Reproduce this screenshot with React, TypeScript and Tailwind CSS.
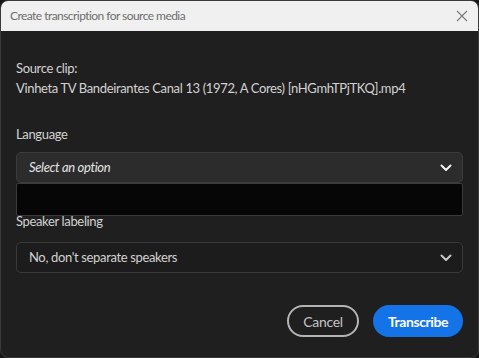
import React from 'react';

function Chevron({ className = '' }: { className?: string }) {
  return (
    <svg width="12" height="8" viewBox="0 0 12 8" className={className} fill="none">
      <path d="M1.5 1.5L6 6L10.5 1.5" stroke="currentColor" strokeWidth="2" strokeLinecap="round" strokeLinejoin="round" />
    </svg>
  );
}

export default function App() {
  return (
    <div className="w-[479px] h-[358px] bg-[#171717] font-['Lato','Liberation_Sans',sans-serif]">
      <div className="relative w-full h-full flex flex-col rounded-[8px] border border-[#3a3a3a] overflow-hidden bg-[#1f1f1f]">
        <div className="h-[30px] shrink-0 flex items-center justify-between bg-[#f0f0f0] pl-[9px] pr-[10px]">
          <span className="text-[12px] tracking-[-0.55px] text-[#6e6e6e]">Create transcription for source media</span>
          <svg width="12" height="12" viewBox="0 0 12 12" className="text-[#7a7a7a]">
            <path d="M1 1L11 11M11 1L1 11" stroke="currentColor" strokeWidth="1.1" />
          </svg>
        </div>

        <div className="flex-1 flex flex-col px-[15px] pt-[27px] text-[13px] tracking-[-0.35px] text-[#d2d2d2]">
          <div className="leading-[20px]">Source clip:</div>
          <div className="leading-[20px]">Vinheta TV Bandeirantes Canal 13 (1972, A Cores) [nHGmhTPjTKQ].mp4</div>

          <div className="mt-[26px] leading-[20px]">Language</div>
          <div className="relative mt-[8px]">
            <div className="h-[31px] flex items-center justify-between rounded-[5px] border border-[#3c3c3c] bg-[#2c2c2c] pl-[12px] pr-[10px] text-[#e4e4e4]">
              <span className="italic">Select an option</span>
              <Chevron className="text-[#f2f2f2]" />
            </div>
            <div className="absolute left-0 right-0 top-[31px] h-[33px] bg-[#060606] border border-[#3a3a3a] rounded-[2px]" />
          </div>

          <div className="mt-[28px] leading-[20px]">Speaker labeling</div>
          <div className="mt-[11px] h-[31px] flex items-center justify-between rounded-[5px] border border-[#393939] bg-[#1c1c1c] pl-[12px] pr-[10px] text-[#d2d2d2]">
            <span>No, don't separate speakers</span>
            <Chevron className="text-[#c8c8c8]" />
          </div>

          <div className="mt-[32px] flex justify-end gap-[14px]">
            <button className="h-[32px] w-[72px] rounded-full border-2 border-[#b4b4b4] text-[#c4c4c4] text-[14px] tracking-[-0.3px]">Cancel</button>
            <button className="h-[32px] w-[90px] rounded-full bg-[#1473e6] text-white font-bold text-[14px] tracking-[-0.4px]">Transcribe</button>
          </div>
        </div>
      </div>
    </div>
  );
}
